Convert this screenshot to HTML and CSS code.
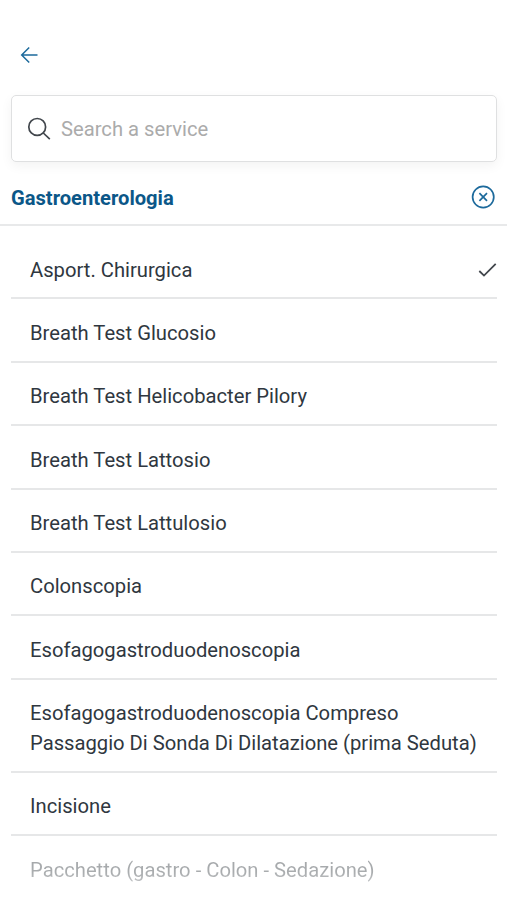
FILE: index.html
```html
<!DOCTYPE html>
<html lang="it">
<head>
<meta charset="utf-8">
<title>Services</title>
<link rel="stylesheet" href="styles.css">
</head>
<body>
<main class="screen">
  <header class="top">
    <svg class="back" viewBox="0 0 18 18"><path d="M17.5 9H2M9.2 1.5 1.7 9l7.5 7.5"/></svg>
  </header>
  <div class="search">
    <svg class="glass" viewBox="0 0 24 24"><circle cx="10.2" cy="9.9" r="8.4"/><path d="m16.3 16 6.5 6.2"/></svg>
    <span>Search a service</span>
  </div>
  <div class="category">
    <h1>Gastroenterologia</h1>
    <svg class="clear" viewBox="0 0 24 24"><circle cx="12.2" cy="12" r="10.6"/><path d="m8.4 8.2 7.6 7.6m0-7.6-7.6 7.6"/></svg>
  </div>
  <ul class="list">
    <li><span>Asport. Chirurgica</span><svg class="check" viewBox="0 0 18 14"><path d="m.8 8 4.7 4.6L17.2.9"/></svg></li>
    <li>Breath Test Glucosio</li>
    <li>Breath Test Helicobacter Pilory</li>
    <li>Breath Test Lattosio</li>
    <li>Breath Test Lattulosio</li>
    <li>Colonscopia</li>
    <li>Esofagogastroduodenoscopia</li>
    <li>Esofagogastroduodenoscopia Compreso<br>Passaggio Di Sonda Di Dilatazione (prima Seduta)</li>
    <li>Incisione</li>
    <li class="last">Pacchetto (gastro - Colon - Sedazione)</li>
  </ul>
</main>
</body>
</html>
```
FILE: styles.css
```css
* { box-sizing: border-box; }
body { margin: 0; background: #fff; font-family: Roboto, sans-serif; font-size: 20.22px; color: #2f3740; }
.screen { height: 900px; overflow: hidden; }
.top { height: 95px; padding: 46px 0 0 20px; }
svg { display: block; fill: none; stroke: currentColor; flex: none; }
.back { width: 18px; height: 18px; color: #1d6a9c; stroke-width: 1.5; }
.search { margin: 0 10px 0 11px; height: 67px; border: 1.5px solid #dfe0e1; border-radius: 5px; box-shadow: 0 4px 12px rgba(0,0,0,.05); display: flex; align-items: center; padding: 0 15px; gap: 10px; color: #ababab; }
.glass { width: 24px; height: 24px; color: #41464c; stroke-width: 1.7; }
.category { height: 64px; border-bottom: 2px solid #e8e9ea; padding: 10px 12px 0 11px; display: flex; align-items: center; justify-content: space-between; color: #0b5788; }
h1 { margin: 0; font-size: 20.15px; font-weight: 700; }
.clear { width: 24px; height: 24px; margin-top: -2px; color: #1d6a9c; stroke-width: 1.7; }
.list { list-style: none; margin: 10px 10px 0 11px; padding: 0; line-height: 29.6px; }
li { border-bottom: 2px solid #e6e7e8; padding: 19.6px 0 12.2px 19px; display: block; white-space: nowrap; }
li:first-child { display: flex; align-items: center; justify-content: space-between; }
.check { width: 19px; height: 14px; color: #41464c; stroke-width: 1.8; }
.last { border: 0; color: transparent; background: linear-gradient(#a3a6a9 20px, #a9acae 36px, #c4c6c8 48px) text; }
```
